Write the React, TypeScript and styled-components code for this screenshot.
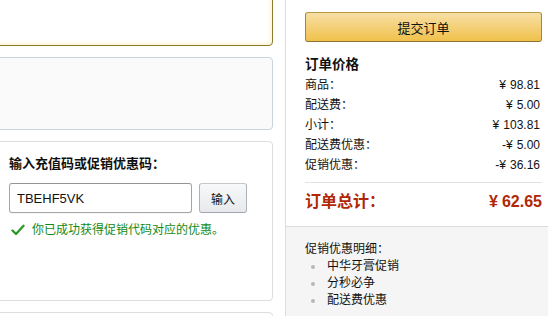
import React from "react";
import styled, { createGlobalStyle } from "styled-components";

const GlobalStyle = createGlobalStyle`
  html, body {
    margin: 0;
    padding: 0;
    background: #fff;
  }
  body {
    font-family: "Liberation Sans", "Noto Sans CJK SC", sans-serif;
    color: #111;
    overflow: hidden;
  }
`;

const Page = styled.div`
  display: flex;
  width: 548px;
  height: 316px;
  overflow: hidden;
`;

const LeftCol = styled.div`
  width: 273px;
  flex-shrink: 0;
  display: flex;
  flex-direction: column;
  gap: 11px;
`;

const Box = styled.div<{ $variant?: "selected" | "muted" | "plain" }>`
  box-sizing: border-box;
  flex-shrink: 0;
  margin-left: -12px;
  border-radius: 4px;
  border: 1px solid
    ${(p) =>
      p.$variant === "selected"
        ? "#8f7a2a"
        : p.$variant === "muted"
        ? "#c9d5de"
        : "#dddddd"};
  background: ${(p) => (p.$variant === "muted" ? "#fafafa" : "#fff")};
  box-shadow: ${(p) =>
    p.$variant === "selected" ? "inset 0 0 5px 1px #fcf1cc" : "none"};
`;

const TopBox = styled(Box)`
  margin-top: -30px;
  height: 76px;
`;

const InfoBox = styled(Box)`
  height: 73px;
`;

const PromoBox = styled(Box)`
  height: 160px;
  padding: 13px 0 0 20px;
`;

const NextBox = styled(Box)`
  height: 40px;
`;

const PromoTitle = styled.div`
  font-size: 13px;
  font-weight: bold;
  line-height: 18px;
  color: #111;
`;

const InputRow = styled.div`
  display: flex;
  gap: 7px;
  margin-top: 10px;
`;

const CodeInput = styled.div`
  box-sizing: border-box;
  width: 183px;
  height: 30px;
  border: 1px solid #a6a6a6;
  border-top-color: #949494;
  border-radius: 3px;
  box-shadow: inset 0 1px 0 rgba(255, 255, 255, 0.5), 0 1px 0 rgba(0, 0, 0, 0.04);
  padding-left: 7px;
  display: flex;
  align-items: center;
  font-size: 13px;
  color: #111;
`;

const GreyButton = styled.button`
  box-sizing: border-box;
  width: 48px;
  height: 30px;
  border: 1px solid #adb1b8;
  border-top-color: #c5c7cb;
  border-bottom-color: #a2a6ac;
  border-radius: 3px;
  background: linear-gradient(to bottom, #f7f8fa, #e7e9ec);
  font-family: inherit;
  font-size: 12px;
  color: #111;
  padding: 0;
`;

const Success = styled.div`
  display: flex;
  align-items: center;
  gap: 7px;
  margin-top: 9px;
  margin-left: 2px;
  font-size: 12px;
  line-height: 16px;
  color: #148a14;
`;

const RightPanel = styled.div`
  flex: 1;
  margin-left: 12px;
  border-left: 1px solid #dddddd;
  display: flex;
  flex-direction: column;
`;

const Summary = styled.div`
  padding: 12px 6px 13px 19px;
`;

const SubmitButton = styled.button`
  box-sizing: border-box;
  width: 100%;
  height: 30px;
  border: 1px solid #a88734;
  border-color: #b8993f #a88734 #8d7230;
  border-radius: 3px;
  background: linear-gradient(to bottom, #f7dfa5, #f0c14b);
  font-family: inherit;
  font-size: 13px;
  color: #111;
  padding: 0;
`;

const SummaryTitle = styled.div`
  margin-top: 13px;
  font-size: 13.5px;
  font-weight: bold;
  line-height: 20px;
`;

const Row = styled.div`
  display: flex;
  justify-content: space-between;
  font-size: 12px;
  line-height: 20px;
  color: #111;
  padding-right: 2px;
`;

const Yen = styled.span`
  margin-right: 4px;
`;

const Divider = styled.div`
  height: 1px;
  background: #e3e3e3;
  margin-top: 7px;
`;

const TotalRow = styled.div`
  display: flex;
  justify-content: space-between;
  margin-top: 8px;
  font-size: 16px;
  font-weight: bold;
  line-height: 22px;
  color: #b12704;
`;

const Details = styled.div`
  flex: 1;
  background: #f5f5f5;
  border-top: 1px solid #dddddd;
  padding: 14px 6px 0 19px;
  font-size: 12px;
  line-height: 17px;
  color: #111;
`;

const BulletList = styled.ul`
  margin: 0;
  padding: 0;
  list-style: none;
`;

const Bullet = styled.li`
  display: flex;
  align-items: center;
  &::before {
    content: "";
    width: 4px;
    height: 4px;
    border-radius: 50%;
    background: #b8b8b8;
    margin: 0 12px 0 6px;
  }
`;

const CheckIcon = () => (
  <svg width="14" height="12" viewBox="0 0 14 12">
    <path d="M1.5 6.5 L5 10 L12.5 1.8" fill="none" stroke="#2f9a2a" strokeWidth="2.4" strokeLinecap="round" strokeLinejoin="round" />
  </svg>
);

const prices: [string, string, string][] = [
  ["商品：", "", "98.81"],
  ["配送费：", "", "5.00"],
  ["小计：", "", "103.81"],
  ["配送费优惠：", "-", "5.00"],
  ["促销优惠：", "-", "36.16"],
];

const promos = ["中华牙膏促销", "分秒必争", "配送费优惠"];

export default function App() {
  return (
    <>
      <GlobalStyle />
      <Page>
        <LeftCol>
          <TopBox $variant="selected" />
          <InfoBox $variant="muted" />
          <PromoBox>
            <PromoTitle>输入充值码或促销优惠码：</PromoTitle>
            <InputRow>
              <CodeInput>TBEHF5VK</CodeInput>
              <GreyButton>输入</GreyButton>
            </InputRow>
            <Success>
              <CheckIcon />
              你已成功获得促销代码对应的优惠。
            </Success>
          </PromoBox>
          <NextBox />
        </LeftCol>
        <RightPanel>
          <Summary>
            <SubmitButton>提交订单</SubmitButton>
            <SummaryTitle>订单价格</SummaryTitle>
            {prices.map(([label, sign, amount]) => (
              <Row key={label}>
                <span>{label}</span>
                <span>
                  {sign}
                  <Yen>¥</Yen>
                  {amount}
                </span>
              </Row>
            ))}
            <Divider />
            <TotalRow>
              <span>订单总计：</span>
              <span>
                <Yen>¥</Yen>62.65
              </span>
            </TotalRow>
          </Summary>
          <Details>
            促销优惠明细：
            <BulletList>
              {promos.map((p) => (
                <Bullet key={p}>{p}</Bullet>
              ))}
            </BulletList>
          </Details>
        </RightPanel>
      </Page>
    </>
  );
}
